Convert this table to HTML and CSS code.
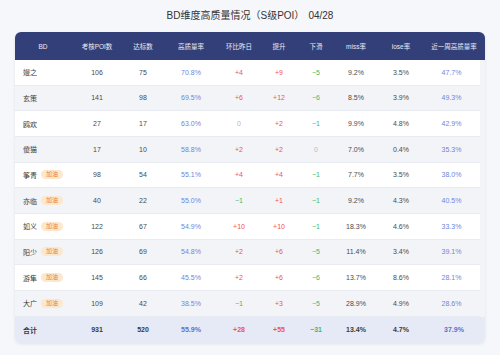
FILE: index.html
```html
<!DOCTYPE html>
<html lang="zh">
<head>
<meta charset="utf-8">
<link rel="stylesheet" href="styles.css">
</head>
<body>
<div class="page">
  <h1 class="title">BD维度高质量情况（S级POI）<span class="date">04/28</span></h1>
  <div class="card">
    <div class="row head">
      <div class="c">BD</div><div class="c">考核POI数</div><div class="c">达标数</div><div class="c">高质量率</div><div class="c">环比昨日</div><div class="c">提升</div><div class="c">下滑</div><div class="c">miss率</div><div class="c">lose率</div><div class="c">近一周高质量率</div>
    </div>
    <div class="body">
      <div class="row">
        <div class="c name">嫚之</div><div class="c">106</div><div class="c">75</div><div class="c blue">70.8%</div><div class="c red">+4</div><div class="c red">+9</div><div class="c green">−5</div><div class="c">9.2%</div><div class="c">3.5%</div><div class="c blue">47.7%</div>
      </div>
      <div class="row alt">
        <div class="c name">玄策</div><div class="c">141</div><div class="c">98</div><div class="c blue">69.5%</div><div class="c red">+6</div><div class="c red">+12</div><div class="c green">−6</div><div class="c">8.5%</div><div class="c">3.9%</div><div class="c blue">49.3%</div>
      </div>
      <div class="row">
        <div class="c name">鸥欢</div><div class="c">27</div><div class="c">17</div><div class="c blue">63.0%</div><div class="c zero">0</div><div class="c red">+2</div><div class="c green">−1</div><div class="c">9.9%</div><div class="c">4.8%</div><div class="c blue">42.9%</div>
      </div>
      <div class="row alt">
        <div class="c name">傻猫</div><div class="c">17</div><div class="c">10</div><div class="c blue">58.8%</div><div class="c red">+2</div><div class="c red">+2</div><div class="c zero">0</div><div class="c">7.0%</div><div class="c">0.4%</div><div class="c blue">35.3%</div>
      </div>
      <div class="row">
        <div class="c name">筝青<span class="badge">加油</span></div><div class="c">98</div><div class="c">54</div><div class="c blue">55.1%</div><div class="c red">+4</div><div class="c red">+4</div><div class="c green">−1</div><div class="c">7.7%</div><div class="c">3.5%</div><div class="c blue">38.0%</div>
      </div>
      <div class="row alt">
        <div class="c name">亦临<span class="badge">加油</span></div><div class="c">40</div><div class="c">22</div><div class="c blue">55.0%</div><div class="c green">−1</div><div class="c red">+1</div><div class="c green">−1</div><div class="c">9.2%</div><div class="c">4.3%</div><div class="c blue">40.5%</div>
      </div>
      <div class="row">
        <div class="c name">如义<span class="badge">加油</span></div><div class="c">122</div><div class="c">67</div><div class="c blue">54.9%</div><div class="c red">+10</div><div class="c red">+10</div><div class="c green">−1</div><div class="c">18.3%</div><div class="c">4.6%</div><div class="c blue">33.3%</div>
      </div>
      <div class="row alt">
        <div class="c name">阳少<span class="badge">加油</span></div><div class="c">126</div><div class="c">69</div><div class="c blue">54.8%</div><div class="c red">+2</div><div class="c red">+6</div><div class="c green">−5</div><div class="c">11.4%</div><div class="c">3.4%</div><div class="c blue">39.1%</div>
      </div>
      <div class="row">
        <div class="c name">游隼<span class="badge">加油</span></div><div class="c">145</div><div class="c">66</div><div class="c blue">45.5%</div><div class="c red">+2</div><div class="c red">+6</div><div class="c green">−6</div><div class="c">13.7%</div><div class="c">8.6%</div><div class="c blue">28.1%</div>
      </div>
      <div class="row alt">
        <div class="c name">大广<span class="badge">加油</span></div><div class="c">109</div><div class="c">42</div><div class="c blue">38.5%</div><div class="c green">−1</div><div class="c red">+3</div><div class="c green">−5</div><div class="c">28.9%</div><div class="c">4.9%</div><div class="c blue">28.6%</div>
      </div>
    </div>
    <div class="row total">
      <div class="c name">合计</div><div class="c">931</div><div class="c">520</div><div class="c blue">55.9%</div><div class="c red">+28</div><div class="c red">+55</div><div class="c green">−31</div><div class="c">13.4%</div><div class="c">4.7%</div><div class="c blue">37.9%</div>
    </div>
  </div>
</div>
</body>
</html>
```
FILE: styles.css
```css
html, body {
  margin: 0;
  padding: 0;
  background: #f6f7fb;
}
body {
  font-family: "Liberation Sans", "Noto Sans CJK SC", sans-serif;
  color: #4a4a4a;
}
.page {
  width: 500px;
  height: 355px;
  padding: 0 15px;
  box-sizing: border-box;
}
.title {
  margin: 0;
  height: 32px;
  line-height: 32px;
  font-size: 10px;
  font-weight: normal;
  color: #333;
  text-align: center;
}
.date {
  margin-left: 4px;
}
.card {
  background: #f3f4f8;
  border-radius: 6px;
  overflow: hidden;
  box-shadow: 0 1px 3px rgba(40, 50, 90, 0.10);
}
.row {
  display: grid;
  grid-template-columns: 56px 52px 40px 56px 40px 40px 34px 46px 44px 62px;
  align-items: center;
  font-size: 7px;
}
.c {
  text-align: center;
  white-space: nowrap;
}
.head {
  height: 28px;
  background: #333f78;
  color: #e8ebf6;
  font-size: 6.5px;
}
.body {
  width: 465px;
}
.body .row {
  grid-template-columns: 56px 52px 40px 56px 40px 40px 34px 46px 44px 57px;
  height: 25.67px;
  box-sizing: border-box;
  background: #ffffff;
  border-bottom: 1px solid #e9ebf2;
}
.body .row.alt {
  background: #f3f4f8;
}
.name {
  text-align: left;
  padding-left: 8px;
  color: #3a3a3a;
  display: flex;
  align-items: center;
}
.badge {
  display: inline-block;
  margin-left: 4px;
  width: 22px;
  height: 9px;
  line-height: 9px;
  border-radius: 4.5px;
  background: #fde7ce;
  color: #e3883a;
  font-size: 6px;
  text-align: center;
}
.blue { color: #6f86d8; }
.red { color: #ee5555; }
.green { color: #45b868; }
.zero { color: #b8b8b8; }
.total {
  height: 26.6px;
  background: #e5eaf6;
  font-weight: bold;
  color: #3a3a3a;
}
.total .blue { color: #5a72cf; }
```
